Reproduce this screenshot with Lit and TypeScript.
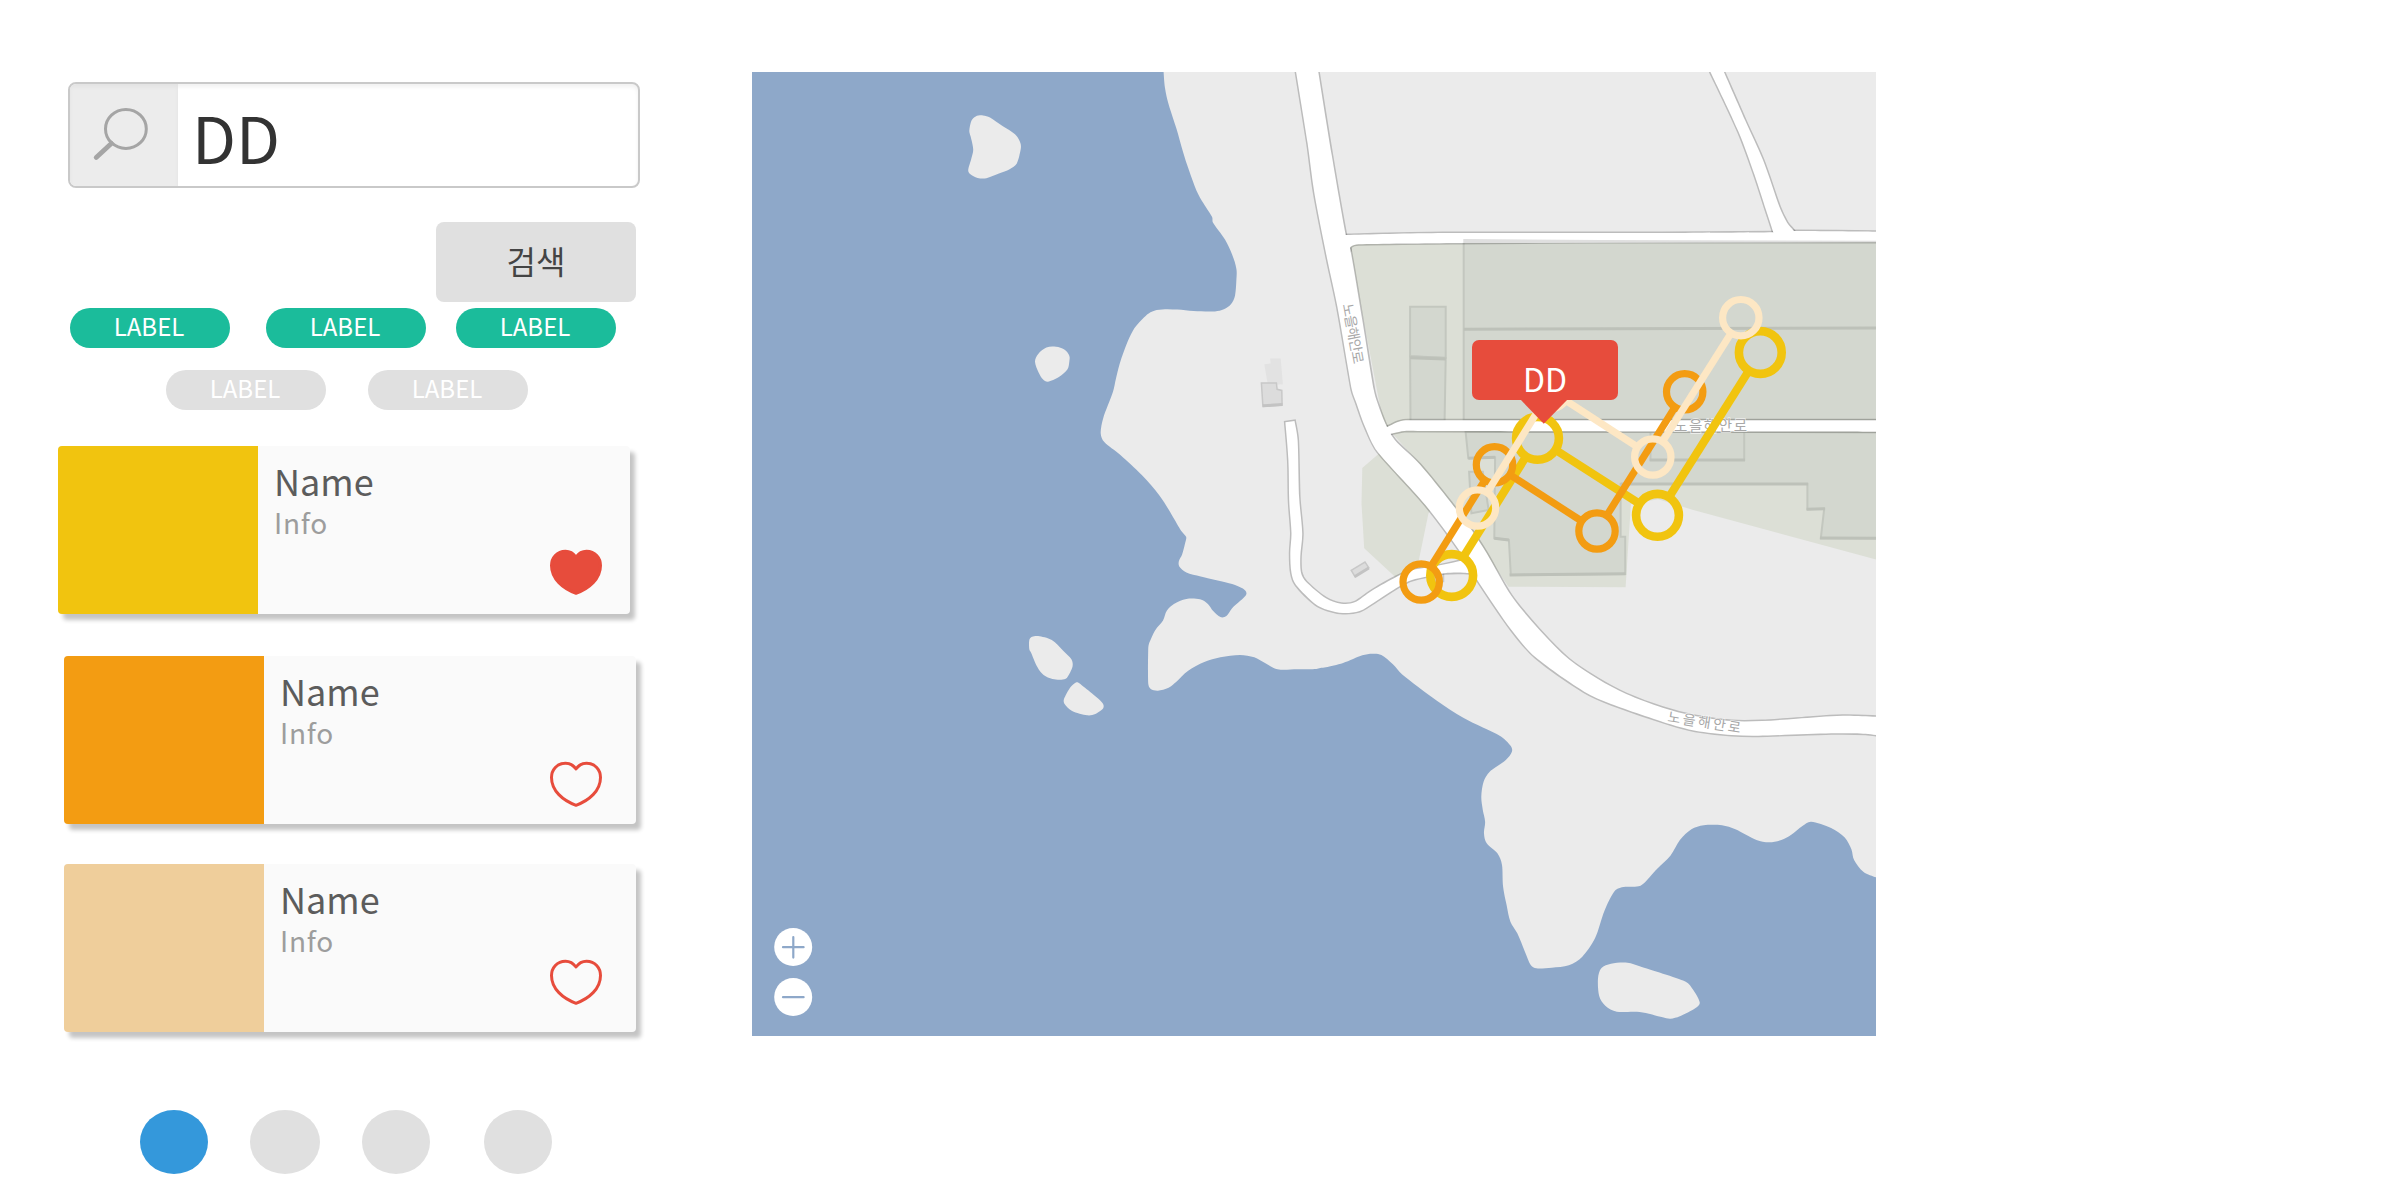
import { LitElement, html, svg, css } from "lit";
import { customElement, property } from "lit/decorators.js";

const FONT = css`"Noto Sans CJK KR", "Noto Sans", sans-serif`;

type Pt = [number, number];

/* Map geometry is digitised per tile; a tile converts its own units to canvas pixels. */
const tile = (ox: number, oy: number, sx: number, sy: number) => (list: string): Pt[] =>
  list.trim().split(/\s+/).map((pair) => {
    const [x, y] = pair.split(",").map(Number);
    return [ox + x / sx, oy + y / sy] as Pt;
  });

const west = tile(740, 60, 2.8, 2.8);
const north = tile(1280, 60, 2.613, 3);
const middle = tile(1280, 380, 2.613, 3);
const southWest = tile(740, 600, 2.8, 3);
const south = tile(1280, 700, 2.613, 3);

const n = (v: number) => v.toFixed(1);
const line = (pts: Pt[]) => "M" + pts.map(([x, y]) => `${n(x)} ${n(y)}`).join("L");
const poly = (pts: Pt[]) => line(pts) + "Z";

/* Catmull-Rom spline through the points. */
const curve = (pts: Pt[], closed = false, head = "M"): string => {
  const count = pts.length;
  const at = (i: number) =>
    closed ? pts[(i + count) % count] : pts[Math.max(0, Math.min(count - 1, i))];
  let d = `${head}${n(pts[0][0])} ${n(pts[0][1])}`;
  for (let i = 0; i < (closed ? count : count - 1); i++) {
    const a = at(i - 1), b = at(i), c = at(i + 1), e = at(i + 2);
    const len = Math.hypot(c[0] - b[0], c[1] - b[1]);
    const k1 = Math.min(1 / 6, len / 3 / (Math.hypot(c[0] - a[0], c[1] - a[1]) || 1));
    const k2 = Math.min(1 / 6, len / 3 / (Math.hypot(e[0] - b[0], e[1] - b[1]) || 1));
    d += `C${n(b[0] + (c[0] - a[0]) * k1)} ${n(b[1] + (c[1] - a[1]) * k1)} ${n(c[0] - (e[0] - b[0]) * k2)} ${n(c[1] - (e[1] - b[1]) * k2)} ${n(c[0])} ${n(c[1])}`;
  }
  return closed ? d + "Z" : d;
};

const band = (left: Pt[], right: Pt[]) => curve(left) + curve([...right].reverse(), false, "L") + "Z";

const MAINLAND =
  curve([
    ...west(`1186,34 1190,78 1200,124 1222,192 1240,256 1257,308 1278,365 1298,402 1322,440 1324,455
      1358,503 1378,545 1390,585 1390,615 1386,660 1375,683 1355,698 1330,704 1270,703 1225,699 1190,698
      1160,702 1140,713 1100,758 1068,835 1053,890 1044,930 1017,1003 1010,1045 1020,1070 1065,1106
      1125,1162 1175,1220 1210,1275 1235,1318 1249,1335 1247,1350 1238,1385 1229,1403 1230,1418 1250,1435
      1290,1446 1378,1467 1408,1480 1418,1495 1400,1515 1378,1535 1362,1557 1345,1560 1325,1543 1310,1523
      1288,1510 1250,1509 1215,1523 1195,1542`),
    ...southWest(`1184,62 1163,90 1145,132 1143,150 1143,250 1150,267 1170,272 1200,263 1222,245 1255,212
      1300,186 1345,172 1400,165 1440,172 1470,189 1505,208 1560,208`),
    ...middle(`95,867 105,864 120,862 165,849 215,826 242,821 265,825 295,853 320,884 410,962 480,1014`),
    ...south(`575,108 603,138 606,155 590,180 548,215 532,245 526,290 530,330 536,365 533,400 540,430
      568,460 580,495 583,560 592,615 602,665 620,700 640,755 655,795 670,805 710,803 755,796 790,770
      823,715 848,632 873,575 893,562 937,559 955,545 985,507 1020,467 1045,420 1075,388 1107,376 1155,376
      1190,388 1245,420 1278,427 1310,420 1335,405 1365,378 1388,365 1440,384 1475,412 1493,448 1500,480
      1525,516 1560,533`),
  ]) + "L1877 71L1163.5 71Z";

const ISLANDS = [
  west(`648,170 660,158 680,155 700,161 735,185 770,208 785,232 786,250 775,290 755,306 725,318 690,331
    665,330 645,320 639,308 648,275 653,250 646,215 642,198`),
  west(`826,845 835,823 858,805 885,803 908,811 922,828 922,845 917,866 893,888 862,901 848,894 836,875`),
  southWest(`810,120 818,110 835,108 873,120 905,152 928,178 931,200 915,234 900,239 875,237 850,225
    833,202 815,158 810,148`),
  southWest(`942,247 925,262 907,298 909,312 930,333 972,346 995,342 1017,325 1015,309 985,280 950,250`),
  south(`831,835 840,804 865,791 908,788 940,799 1060,845 1080,870 1097,908 1085,925 1045,949 1020,956
    1000,952 940,936 880,935 850,917 834,888`),
].map((pts) => curve(pts, true));

const PARKS = [
  poly([
    ...north(`183,552 1560,545`),
    ...middle(`1560,539 1080,390 988,358 917,372 903,622 597,620 500,460 365,253 270,130`),
    ...north(`215,760`),
  ]),
  poly(middle(`275,205 215,264 213,370 220,505 302,592 362,545 388,400 400,380`)),
];

const ROADS = [
  band(
    [
      ...north(`40,24 42,36 72,250 90,400 122,590 150,740 188,990`),
      ...middle(`200,70 222,140 255,215 380,375 480,530 520,608 605,750 668,832 795,935 865,972 1020,1033
        1085,1052 1180,1065 1250,1067 1440,1060 1530,1061 1568,1067`),
    ],
    [
      ...north(`98,24 100,36 135,285 172,525 184,570 215,780 245,990`),
      ...middle(`255,70 275,130 300,180 365,253 445,365 495,440 540,520 605,648 680,752 755,838 830,896
        905,942 1000,983 1080,1007 1180,1023 1260,1023 1350,1016 1470,1007 1568,1011`),
    ],
  ),
  band(
    north(`160,526 173,525 430,519 1000,519 1290,517 1340,513 1568,515`),
    north(`160,590 182,575 185,560 205,553 470,549 800,546 1568,546`),
  ),
  band(
    north(`1120,24 1125,36 1198,215 1240,345 1270,450 1289,517 1292,530`),
    north(`1155,24 1160,36 1215,180 1262,300 1305,440 1325,488 1343,513 1350,530`),
  ),
  band(
    middle(`265,150 287,137 310,125 335,121 1568,121`),
    middle(`280,164 298,159 325,153 360,153 1568,155`),
  ),
  band(
    middle(`14,127 22,240 24,360 30,460 27,520 30,580 42,615 92,672 125,690 165,699 208,693 245,668
      310,620 345,600 430,580 480,578 510,582`),
    middle(`38,123 46,180 50,350 58,460 53,530 55,578 68,605 120,655 160,671 195,667 240,632 305,590
      345,570 400,560 470,543 485,535`),
  ),
];

const BUILDINGS = [
  north(`480,547 1568,545 1568,916 1568,1081 480,1081`),
  north(`340,740 433,740 433,893 340,889`),
  north(`340,889 433,895 430,1082 341,1082`),
  middle(`485,155 492,235 562,232 560,475 598,480 603,585 902,582 902,470 890,470 890,312 1378,312
    1378,388 1422,386 1413,475 1568,475 1568,155`),
  middle(`494,275 530,275 545,390 500,400`),
  middle(`968,155 1213,155 1213,240 968,240`),
].map(poly);

const BUILDING_SHADOWS = [
  north(`480,808 1568,804`),
  north(`340,893 433,897`),
  middle(`492,235 562,232`),
  middle(`560,475 598,480`),
  middle(`600,585 903,581`),
  middle(`890,312 1380,312`),
  middle(`1376,388 1424,386`),
  middle(`1411,474 1568,475`),
  middle(`966,240 1215,240`),
].map(line);

interface Route {
  color: string;
  radius: number;
  width: number;
  stroke: number;
  stops: Pt[];
}

const ROUTES: Route[] = [
  {
    color: "#f1c40f", radius: 21.4, width: 8.2, stroke: 8.6,
    stops: [[1451.7, 575.5], [1537.5, 438.3], [1657.5, 515.3], [1760.3, 352.5]],
  },
  {
    color: "#f39c12", radius: 18.2, width: 7.2, stroke: 7.2,
    stops: [[1421.2, 582], [1494.5, 464.8], [1597, 531], [1684.7, 391.8]],
  },
  {
    color: "#fde7c4", radius: 18.2, width: 7.2, stroke: 7.2,
    stops: [[1477.5, 508], [1550.5, 390.7], [1652.8, 457], [1740.8, 317.7]],
  },
];

@customElement("area-map")
class AreaMap extends LitElement {
  static styles = css`
    :host { display: block; width: 1124px; height: 964px; }
    svg { display: block; width: 100%; height: 100%; }
    .water { fill: #8ea8c9; }
    .land { fill: #ebebeb; }
    .park { fill: #dcdfd6; }
    .building { fill: #d3d7cf; stroke: #c3c7bf; stroke-width: 2; }
    .shade { fill: none; stroke: #bdc1b9; stroke-width: 3; }
    .casing { fill: none; stroke: rgba(0, 0, 0, 0.2); stroke-width: 3; }
    .road { fill: #fff; }
    .overhang { fill: #dfdfdf; }
    .hut { fill: #dcdcdc; stroke: #c8c8c8; stroke-width: 1.5; }
    .hut-faint { fill: #e2e2e2; }
    .hut-base { fill: none; stroke: #c3c3c3; stroke-width: 3; }
    .street { fill: #a8a8a8; stroke: #fff; stroke-width: 1.5; stroke-opacity: 0.7; paint-order: stroke; font-family: ${FONT}; }
    .callout { fill: #e74c3c; }
    .callout-text { fill: #fff; font-family: ${FONT}; font-size: 32px; text-anchor: middle; }
    .knob { fill: #fff; }
    .sign { fill: none; stroke: #8ea8c9; stroke-width: 2.2; stroke-linecap: round; }
  `;

  private route({ color, radius, width, stroke, stops }: Route) {
    const legs = stops.slice(1).map(([x2, y2], i) => {
      const [x1, y1] = stops[i];
      const len = Math.hypot(x2 - x1, y2 - y1);
      const ux = ((x2 - x1) / len) * radius;
      const uy = ((y2 - y1) / len) * radius;
      return svg`<line x1=${x1 + ux} y1=${y1 + uy} x2=${x2 - ux} y2=${y2 - uy}></line>`;
    });
    return svg`<g fill="none" stroke=${color}>
      <g stroke-width=${width}>${legs}</g>
      <g stroke-width=${stroke}>${stops.map(([x, y]) => svg`<circle cx=${x} cy=${y} r=${radius}></circle>`)}</g>
    </g>`;
  }

  render() {
    return html`<svg viewBox="752 72 1124 964">
      <rect class="water" x="752" y="72" width="1124" height="964"></rect>
      <path class="land" d=${MAINLAND}></path>
      ${ISLANDS.map((d) => svg`<path class="land" d=${d}></path>`)}
      ${PARKS.map((d) => svg`<path class="park" d=${d}></path>`)}
      ${BUILDINGS.map((d) => svg`<path class="building" d=${d}></path>`)}
      ${BUILDING_SHADOWS.map((d) => svg`<path class="shade" d=${d}></path>`)}
      <path class="hut-faint" d=${poly(west("1484,836 1514,836 1520,908 1478,910 1468,852 1486,850"))}></path>
      <path class="hut" d=${poly(west("1460,904 1502,904 1504,922 1517,925 1518,966 1464,970"))}></path>
      <path class="hut-base" d=${line(west("1464,968 1519,965"))}></path>
      <path class="hut" d=${poly(middle("186,571 222,546 232,563 196,590"))}></path>
      <path class="hut-base" d=${line(middle("195,590 232,564"))}></path>
      <path class="hut" d="M1434 572H1443.500V581.500H1434Z"></path>
      ${ROADS.map((d) => svg`<path class="casing" d=${d}></path>`)}
      ${ROADS.map((d) => svg`<path class="road" d=${d}></path>`)}
      <path class="overhang" d=${poly(north("479,537 840,540 1568,542 1568,547 479,549"))}></path>
      <text class="street" font-size="14" textLength="61" transform="translate(1342.5 304.5) rotate(79.4)">노을해안로</text>
      <text class="street" font-size="14.5" textLength="73" x="1674" y="430.5">노을해안로</text>
      <text class="street" font-size="14" textLength="74" transform="translate(1667 721.5) rotate(9)">노을해안로</text>
      ${ROUTES.map((r) => this.route(r))}
      <rect class="callout" x="1472" y="340" width="146" height="60" rx="7"></rect>
      <path class="callout" d="M1520 399H1568L1543.8 423.8Z"></path>
      <text class="callout-text" x="1545" y="392">DD</text>
      <circle class="knob" cx="793.2" cy="947" r="19"></circle>
      <path class="sign" d="M783 947.2h20.600M793.300 937v20.600"></path>
      <circle class="knob" cx="793.2" cy="997" r="19"></circle>
      <path class="sign" d="M783 997.200h20.600"></path>
    </svg>`;
  }
}

@customElement("place-card")
class PlaceCard extends LitElement {
  @property() color = "";
  @property({ type: Boolean }) liked = false;
  @property({ type: Number }) right = 34;
  @property({ type: Number }) bottom = 18;

  static styles = css`
    :host { display: block; }
    .card {
      display: flex;
      width: 572px;
      height: 168px;
      border-radius: 4px;
      background: #fafafa;
      box-shadow: 5px 6px 4px rgba(0, 0, 0, 0.23);
      font-family: ${FONT};
    }
    .swatch { width: 200px; border-radius: 4px 0 0 4px; }
    .body { padding: 12px 0 0 16px; flex: 1; }
    .name { font-size: 36px; line-height: 44px; color: #5c5c5c; }
    .info { font-size: 28px; line-height: 40px; color: #9d9d9d; letter-spacing: 0.7px; }
    .like { align-self: flex-end; }
    svg { display: block; width: 52px; height: 46px; }
    path { fill: none; stroke: #e74c3c; stroke-width: 3; stroke-linejoin: round; }
    .full { fill: #e74c3c; }
  `;

  render() {
    return html`<div class="card">
      <div class="swatch" style="background:${this.color}"></div>
      <div class="body">
        <div class="name">Name</div>
        <div class="info">Info</div>
      </div>
      <div class="like" style="padding:0 ${this.right}px ${this.bottom}px 0">
        <svg viewBox="0 0 52 46">
          <path
            class=${this.liked ? "full" : ""}
            d="M26 8C23.500 4.500 20 2.200 15.500 2.200C7 2.200 1.500 8.700 1.500 16.500C1.500 30 13 39.500 26 44.300C39 39.500 50.500 30 50.500 16.500C50.500 8.700 45 2.200 36.500 2.200C32 2.200 28.500 4.500 26 8Z"
          ></path>
        </svg>
      </div>
    </div>`;
  }
}

@customElement("app-root")
class AppRoot extends LitElement {
  static styles = css`
    :host {
      display: flex;
      box-sizing: border-box;
      width: 2400px;
      height: 1200px;
      overflow: hidden;
      background: #fff;
      font-family: ${FONT};
    }
    .panel { display: flex; flex-direction: column; width: 752px; padding-top: 82px; box-sizing: border-box; }
    .search {
      display: flex;
      box-sizing: border-box;
      width: 572px;
      height: 106px;
      margin-left: 68px;
      border: 2px solid #c9c9c9;
      border-radius: 8px;
      background: #fff;
      overflow: hidden;
      box-shadow: inset 0 3px 4px rgba(0, 0, 0, 0.06);
    }
    .glass { width: 108px; background: #ececec; box-shadow: inset 0 3px 4px rgba(0, 0, 0, 0.04); }
    .glass svg { display: block; width: 108px; height: 102px; fill: none; stroke: #a5a5a5; }
    .query { padding: 1px 0 0 14px; font-size: 64px; line-height: 102px; color: #333; }
    .button {
      width: 200px;
      height: 80px;
      margin: 34px 0 0 436px;
      border-radius: 8px;
      background: #e0e0e0;
      color: #444;
      font-size: 32px;
      line-height: 76px;
      text-align: center;
    }
    .tags { display: flex; }
    .on { padding: 6px 0 0 70px; }
    .off { padding: 22px 0 36px 166px; gap: 42px; }
    .tag {
      box-sizing: border-box;
      width: 160px;
      height: 40px;
      padding-right: 2px;
      border-radius: 20px;
      color: #fff;
      background: #e0e0e0;
      font-size: 24px;
      line-height: 36px;
      text-align: center;
    }
    .on .tag { background: #1bbc9b; }
    .on .tag:nth-child(2) { margin: 0 30px 0 36px; }
    .cards { display: flex; flex-direction: column; padding-left: 64px; }
    .first { margin: 0 0 42px -6px; }
    .second { margin-bottom: 40px; }
    .dots { display: flex; padding: 78px 0 0 140px; }
    .dot { width: 68px; height: 64px; border-radius: 50%; background: #e0e0e0; }
    .blue { background: #3498db; margin-right: 42px; }
    .wide { width: 70px; margin-right: 42px; }
    .last { margin-left: 54px; }
    .map { margin-top: 72px; }
  `;

  render() {
    return html`
      <div class="panel">
        <div class="search">
          <div class="glass">
            <svg viewBox="70 84 108 102">
              <ellipse cx="125.900" cy="128.900" rx="20.400" ry="19.500" stroke-width="3"></ellipse>
              <path d="M111.300 143.400L96.200 157.400" stroke-width="4.800" stroke-linecap="round"></path>
            </svg>
          </div>
          <div class="query">DD</div>
        </div>
        <div class="button">검색</div>
        <div class="tags on">
          <div class="tag">LABEL</div>
          <div class="tag">LABEL</div>
          <div class="tag">LABEL</div>
        </div>
        <div class="tags off">
          <div class="tag">LABEL</div>
          <div class="tag">LABEL</div>
        </div>
        <div class="cards">
          <place-card class="first" color="#f1c40f" liked .right=${28} .bottom=${19.3}></place-card>
          <place-card class="second" color="#f39c12" .right=${34} .bottom=${17.3}></place-card>
          <place-card color="#efce9b" .right=${34} .bottom=${27.3}></place-card>
        </div>
        <div class="dots">
          <div class="dot blue"></div>
          <div class="dot wide"></div>
          <div class="dot"></div>
          <div class="dot last"></div>
        </div>
      </div>
      <area-map class="map"></area-map>
    `;
  }
}
